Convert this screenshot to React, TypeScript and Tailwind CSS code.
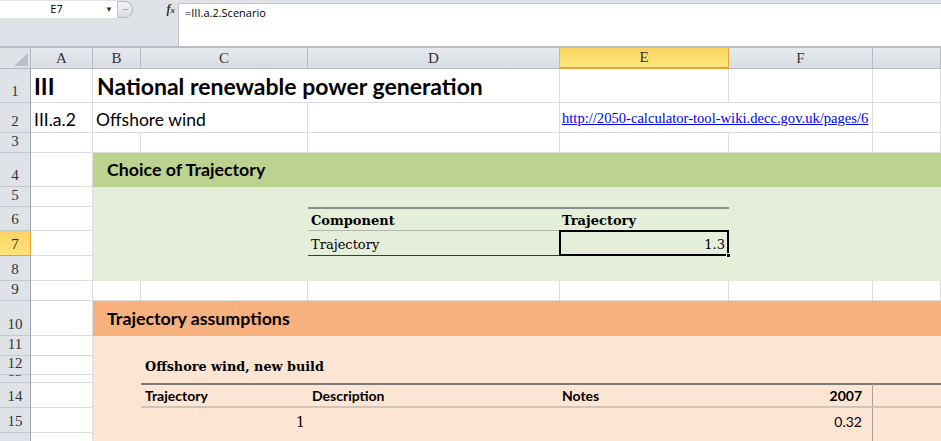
import React from 'react';

const COLS = 'grid grid-cols-[62px_48px_167px_252px_169px_144px_1fr]';
const GL = 'border-r border-b border-[#dadcdd]';
const SERIF = "font-['DejaVu_Serif',serif]";

const RowHead: React.FC<{ n: number; active?: boolean }> = ({ n, active }) => (
  <div
    className={`w-[31px] shrink-0 flex items-end justify-center overflow-hidden border-r border-b font-['Liberation_Serif',serif] text-[15px] leading-none pb-[3px] ${
      active
        ? 'bg-gradient-to-b from-[#f9d462] to-[#ffe37c] border-r-[#e0a43a] border-b-[#e0a43a] text-[#222]'
        : 'bg-[#dfe3e8] border-r-[#9ea5ae] border-b-[#c3c8cf] text-[#333]'
    }`}
  >
    {n}
  </div>
);

const Row: React.FC<{ n: number; h: string; active?: boolean; children: React.ReactNode }> = ({ n, h, active, children }) => (
  <div className={`flex ${h}`}>
    <RowHead n={n} active={active} />
    <div className={`${COLS} flex-1`}>{children}</div>
  </div>
);

const FormulaBar = () => (
  <div className="h-[48px] bg-[#dfe3e8] flex border-b-2 border-[#b9bdc3]">
    <div className="w-[178px] shrink-0 flex flex-col">
      <div className="h-[18px] flex items-center">
        <div className="w-[118px] h-[17px] bg-white flex items-center border-r border-[#c5c9cf]">
          <span className="flex-1 text-center text-[11px] font-['Open_Sans',sans-serif] text-black pl-[8px]">E7</span>
          <span className="text-[8px] text-[#333] pr-[4px]">▼</span>
        </div>
        <div className="w-[15px] h-[17px] rounded-r-full border border-l-0 border-[#b5b9c0] bg-gradient-to-b from-[#f3f5f7] to-[#d8dce2] flex items-center justify-center">
          <span className="block w-[5px] h-[1px] bg-[#9aa0a8]" />
        </div>
        <span className="ml-auto mr-[3px] text-[12px] italic font-['Liberation_Serif',serif] font-bold text-[#333]">
          f<span className="text-[9px]">x</span>
        </span>
      </div>
    </div>
    <div className="flex-1 mt-[3px] bg-white border-l border-t border-[#c0c4ca] pl-[6px] pt-[1px] text-[11px] font-['Open_Sans',sans-serif] text-black">
      =III.a.2.Scenario
    </div>
  </div>
);

const ColHeaders = () => {
  const cols = ['A', 'B', 'C', 'D', 'E', 'F', ''];
  return (
    <div className="flex h-[21px] font-['Liberation_Serif',serif] text-[15px] text-[#333]">
      <div className="w-[31px] shrink-0 bg-[#dfe3e8] border-r border-b border-[#b7bcc4] flex items-end justify-end p-[2px]">
        <svg width="14" height="13" viewBox="0 0 14 13">
          <polygon points="14,0 14,13 0,13" fill="#b9bfc7" />
        </svg>
      </div>
      <div className={`${COLS} flex-1`}>
        {cols.map((c, i) =>
          c === 'E' ? (
            <div key={i} className="bg-gradient-to-b from-[#f9d45f] to-[#ffe77d] border-r border-b-2 border-[#e0a63c] flex items-center justify-center leading-none">
              {c}
            </div>
          ) : (
            <div key={i} className="bg-gradient-to-b from-[#e6e9ee] to-[#d9dee4] border-r border-b border-[#b7bcc4] flex items-center justify-center leading-none">
              {c}
            </div>
          )
        )}
      </div>
    </div>
  );
};

const G = 'bg-[#e5eed9]';
const O = 'bg-[#fde5d3]';

export default function App() {
  return (
    <div className="w-[941px] h-[441px] overflow-hidden bg-white font-['Lato',sans-serif] text-black">
      <FormulaBar />
      <ColHeaders />

      <Row n={1} h="h-[34px]">
        <div className={`${GL} flex items-end pl-[3px] pb-[4px] text-[23px] font-bold leading-none`}>III</div>
        <div className={`col-span-3 ${GL} flex items-end pl-[4px] pb-[4px] text-[23px] font-bold leading-none whitespace-nowrap`}>
          National renewable power generation
        </div>
        <div className={GL} />
        <div className={GL} />
        <div className={GL} />
      </Row>

      <Row n={2} h="h-[30px]">
        <div className={`${GL} flex items-end pl-[3px] pb-[4px] text-[17.5px] leading-none`}>III.a.2</div>
        <div className={`col-span-2 ${GL} flex items-end pl-[3px] pb-[4px] text-[17.5px] leading-none whitespace-nowrap`}>Offshore wind</div>
        <div className={GL} />
        <div className={`col-span-2 ${GL} flex items-end pl-[2px] pb-[6px] leading-none`}>
          <a className="font-['Liberation_Serif',serif] text-[14.6px] text-[#0000ee] underline whitespace-nowrap">
            http://2050-calculator-tool-wiki.decc.gov.uk/pages/6
          </a>
        </div>
        <div className={GL} />
      </Row>

      <Row n={3} h="h-[20px]">
        {Array.from({ length: 7 }).map((_, i) => (
          <div key={i} className={GL} />
        ))}
      </Row>

      <Row n={4} h="h-[34px]">
        <div className={GL} />
        <div className="col-span-6 bg-[#bcd28f] flex items-end pl-[14px] pb-[8px] text-[17.8px] font-bold leading-none">Choice of Trajectory</div>
      </Row>

      <Row n={5} h="h-[20px]">
        <div className={GL} />
        <div className={`col-span-6 ${G}`} />
      </Row>

      <Row n={6} h="h-[24px]">
        <div className={GL} />
        <div className={`col-span-2 ${G}`} />
        <div className={`${G} border-t-2 border-t-[#8c8c8c] border-b border-b-[#b3b5b0] flex items-end pl-[3px] pb-[3px] ${SERIF} text-[13px] font-bold leading-none`}>Component</div>
        <div className={`${G} border-t-2 border-t-[#8c8c8c] border-b border-b-[#b3b5b0] flex items-end pl-[2px] pb-[3px] ${SERIF} text-[13px] font-bold leading-none`}>Trajectory</div>
        <div className={`col-span-2 ${G}`} />
      </Row>

      <Row n={7} h="h-[25px]" active>
        <div className={GL} />
        <div className={`col-span-2 ${G}`} />
        <div className={`${G} border-b border-b-[#3a3a3a] flex items-end pl-[3px] pb-[4px] ${SERIF} text-[13px] leading-none`}>Trajectory</div>
        <div className={`${G} relative border-b border-b-[#3a3a3a] flex items-end justify-end pr-[4px] pb-[4px] ${SERIF} text-[13px] leading-none`}>
          1.3
          <div className="absolute -left-[1px] -top-[1px] right-0 -bottom-[1px] border-2 border-black" />
          <div className="absolute -right-[2px] -bottom-[3px] w-[5px] h-[5px] bg-black border border-white" />
        </div>
        <div className={`col-span-2 ${G}`} />
      </Row>

      <Row n={8} h="h-[25px]">
        <div className={GL} />
        <div className={`col-span-6 ${G}`} />
      </Row>

      <Row n={9} h="h-[20px]">
        {Array.from({ length: 7 }).map((_, i) => (
          <div key={i} className={GL} />
        ))}
      </Row>

      <Row n={10} h="h-[35px]">
        <div className={GL} />
        <div className="col-span-6 bg-[#f6b17f] flex items-end pl-[14px] pb-[8px] text-[17.8px] font-bold leading-none">Trajectory assumptions</div>
      </Row>

      <Row n={11} h="h-[20px]">
        <div className={GL} />
        <div className={`col-span-6 ${O}`} />
      </Row>

      <Row n={12} h="h-[19px]">
        <div className={GL} />
        <div className={O} />
        <div className={`col-span-5 ${O} flex items-end pl-[4px] pb-[1px] ${SERIF} text-[12.8px] font-bold leading-none whitespace-nowrap`}>
          Offshore wind, new build
        </div>
      </Row>

      <Row n={13} h="h-[8px]">
        <div className={GL} />
        <div className={`col-span-6 ${O}`} />
      </Row>

      <Row n={14} h="h-[25px]">
        <div className={GL} />
        <div className={O} />
        <div className={`${O} border-t-2 border-t-[#7d7b79] border-b-2 border-b-[#cdc6bf] flex items-end pl-[4px] pb-[3px] text-[14px] font-bold leading-none`}>Trajectory</div>
        <div className={`${O} border-t-2 border-t-[#7d7b79] border-b-2 border-b-[#cdc6bf] flex items-end pl-[4px] pb-[3px] text-[14px] font-bold leading-none`}>Description</div>
        <div className={`${O} border-t-2 border-t-[#7d7b79] border-b-2 border-b-[#cdc6bf] flex items-end pl-[2px] pb-[3px] text-[14px] font-bold leading-none`}>Notes</div>
        <div className={`${O} border-t-2 border-t-[#7d7b79] border-b-2 border-b-[#cdc6bf] border-r border-r-[#a6a19c] flex items-end justify-end pr-[10px] pb-[3px] text-[14px] font-bold leading-none`}>2007</div>
        <div className={`${O} border-t-2 border-t-[#7d7b79] border-b-2 border-b-[#cdc6bf]`} />
      </Row>

      {[1, 2].map(n => (
        <Row key={n} n={14 + n} h="h-[25px]">
          <div className={GL} />
          <div className={O} />
          <div className={`${O} flex items-end justify-end pr-[3px] pb-[4px] ${SERIF} text-[14px] leading-none`}>{n}</div>
          <div className={O} />
          <div className={O} />
          <div className={`${O} border-r border-r-[#a6a19c] flex items-end justify-end pr-[10px] pb-[4px] text-[14px] leading-none`}>0.32</div>
          <div className={O} />
        </Row>
      ))}
    </div>
  );
}
